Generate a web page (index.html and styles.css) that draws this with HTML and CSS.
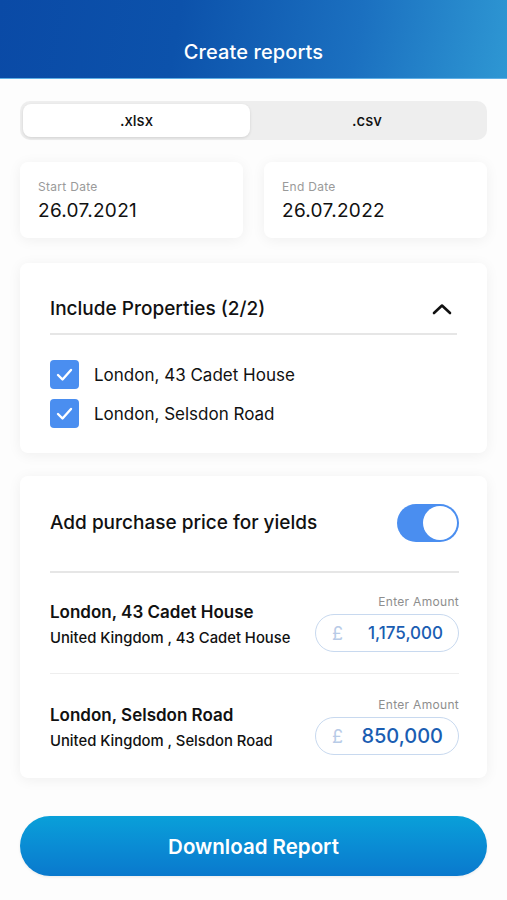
FILE: index.html
```html
<!DOCTYPE html>
<html>
<head>
<meta charset="utf-8">
<link rel="stylesheet" href="styles.css">
</head>
<body>
<header class="topbar"><h1 class="title">Create reports</h1></header>
<main class="content">
  <div class="segmented">
    <div class="seg seg-active">.xlsx</div>
    <div class="seg">.csv</div>
  </div>
  <div class="dates">
    <div class="card date-card">
      <div class="date-label">Start Date</div>
      <div class="date-value">26.07.2021</div>
    </div>
    <div class="card date-card">
      <div class="date-label">End Date</div>
      <div class="date-value">26.07.2022</div>
    </div>
  </div>
  <section class="card props">
    <div class="props-head">
      <span class="section-title">Include Properties (2/2)</span>
      <svg class="chevron" width="20" height="12" viewBox="0 0 20 12"><path d="M2 10 L10 2.5 L18 10" fill="none" stroke="#111" stroke-width="2.6" stroke-linecap="round" stroke-linejoin="round"/></svg>
    </div>
    <ul class="checklist">
      <li class="check-row"><span class="checkbox"><svg width="29" height="29" viewBox="0 0 29 29"><path d="M8 15 L12.5 19.5 L21 10" fill="none" stroke="#fff" stroke-width="2.4" stroke-linecap="round" stroke-linejoin="round"/></svg></span><span class="check-text">London, 43 Cadet House</span></li>
      <li class="check-row"><span class="checkbox"><svg width="29" height="29" viewBox="0 0 29 29"><path d="M8 15 L12.5 19.5 L21 10" fill="none" stroke="#fff" stroke-width="2.4" stroke-linecap="round" stroke-linejoin="round"/></svg></span><span class="check-text">London, Selsdon Road</span></li>
    </ul>
  </section>
  <section class="card purchase">
    <div class="purchase-head">
      <span class="section-title">Add purchase price for yields</span>
      <span class="toggle"><span class="knob"></span></span>
    </div>
    <div class="price-row">
      <div class="prop-info">
        <div class="prop-name">London, 43 Cadet House</div>
        <div class="prop-addr">United Kingdom , 43 Cadet House</div>
      </div>
      <div class="amount-col">
        <div class="amount-label">Enter Amount</div>
        <div class="pill"><span class="pound">£</span><span class="amount">1,175,000</span></div>
      </div>
    </div>
    <div class="price-row last">
      <div class="prop-info">
        <div class="prop-name">London, Selsdon Road</div>
        <div class="prop-addr">United Kingdom , Selsdon Road</div>
      </div>
      <div class="amount-col">
        <div class="amount-label">Enter Amount</div>
        <div class="pill"><span class="pound">£</span><span class="amount amount-lg">850,000</span></div>
      </div>
    </div>
  </section>
  <button class="download">Download Report</button>
</main>
</body>
</html>
```
FILE: styles.css
```css
* { box-sizing: border-box; }
html, body { margin: 0; padding: 0; }
body {
  width: 507px;
  height: 900px;
  background: #fdfdfd;
  font-family: Inter, "Noto Sans", sans-serif;
  color: #111;
  overflow: hidden;
}
.topbar {
  height: 79px;
  padding-top: 40px;
  background: linear-gradient(100deg, #0a4aa6 0%, #0c52ab 35%, #1b70c0 70%, #2e97d3 100%);
  border-bottom: 1px solid #5fb0e6;
}
.title {
  margin: 0;
  text-align: center;
  color: #fff;
  font-size: 20px;
  line-height: 24px;
  font-weight: 500;
  letter-spacing: 0.1px;
}
.content {
  padding: 22px 20px 0;
  display: flex;
  flex-direction: column;
}
.segmented {
  height: 39px;
  padding: 3px;
  border-radius: 10px;
  background: #eeeeee;
  display: flex;
}
.seg {
  flex: 1;
  display: flex;
  align-items: center;
  justify-content: center;
  font-size: 15px;
  font-weight: 500;
  color: #111;
  border-radius: 8px;
}
.seg-active {
  flex: 0 0 227px;
  background: #fff;
  box-shadow: 0 1px 3px rgba(0,0,0,0.12);
}
.card {
  background: #fff;
  border-radius: 8px;
  box-shadow: 0 2px 14px rgba(0,0,0,0.06);
}
.dates {
  margin-top: 22px;
  display: flex;
  gap: 21px;
}
.date-card {
  flex: 1;
  height: 76px;
  padding: 18px 18px 0;
}
.date-label {
  font-size: 12px;
  line-height: 14px;
  color: #9a9a9a;
  letter-spacing: 0.3px;
}
.date-value {
  margin-top: 5px;
  font-size: 19px;
  line-height: 24px;
  color: #111;
  letter-spacing: 0.3px;
}
.props {
  margin-top: 25px;
  padding: 23px 30px 25px;
}
.props-head {
  height: 49px;
  display: flex;
  align-items: center;
  justify-content: space-between;
  border-bottom: 2px solid #e6e6e6;
  padding-bottom: 2px;
}
.section-title {
  font-size: 19px;
  font-weight: 500;
  line-height: 24px;
}
.chevron { margin-right: 5px; }
.checklist {
  list-style: none;
  margin: 25px 0 0;
  padding: 0;
  display: flex;
  flex-direction: column;
  gap: 10px;
}
.check-row {
  display: flex;
  align-items: center;
  height: 29px;
}
.checkbox {
  width: 29px;
  height: 29px;
  border-radius: 4px;
  background: #4a8ef0;
  display: flex;
}
.check-text {
  margin-left: 15px;
  font-size: 17px;
  line-height: 22px;
}
.purchase {
  margin-top: 23px;
  padding: 28px 28px 0 30px;
  height: 302px;
}
.purchase-head {
  height: 38px;
  display: flex;
  align-items: center;
  justify-content: space-between;
}
.toggle {
  width: 62px;
  height: 38px;
  border-radius: 19px;
  background: #4a8ef0;
  padding: 2px;
  display: flex;
  justify-content: flex-end;
}
.knob {
  width: 34px;
  height: 34px;
  border-radius: 50%;
  background: #fff;
}
.price-row {
  display: flex;
  align-items: center;
  justify-content: space-between;
  padding: 22px 0 21px;
  border-top: 1px solid #eeeeee;
}
.purchase-head + .price-row {
  margin-top: 29px;
  border-top: 2px solid #e6e6e6;
}
.price-row.last { padding-top: 24px; }
.prop-name {
  font-size: 17px;
  font-weight: 600;
  line-height: 22px;
}
.prop-addr {
  margin-top: 6px;
  font-size: 14.8px;
  font-weight: 500;
  line-height: 18px;
}
.amount-col {
  display: flex;
  flex-direction: column;
  align-items: flex-end;
}
.amount-label {
  font-size: 12px;
  line-height: 14px;
  color: #8e8e8e;
  letter-spacing: 0.3px;
}
.pill {
  margin-top: 5px;
  width: 144px;
  height: 38px;
  border: 1.5px solid #c8d9ef;
  border-radius: 19px;
  display: flex;
  align-items: center;
  justify-content: space-between;
  padding: 0 15px 0 16px;
}
.pound {
  font-size: 18px;
  color: #b8cbe7;
}
.amount {
  font-size: 17px;
  font-weight: 500;
  color: #1a5db2;
}
.amount-lg { font-size: 20px; }
.download {
  margin-top: 38px;
  height: 60px;
  border: none;
  border-radius: 30px;
  background: linear-gradient(180deg, #09a0d9 0%, #0a8cd4 50%, #0a79cd 100%);
  color: #fff;
  font-family: Inter, "Noto Sans", sans-serif;
  font-size: 20.5px;
  font-weight: 600;
  box-shadow: 0 1px 3px rgba(0,0,0,0.08);
}
```
